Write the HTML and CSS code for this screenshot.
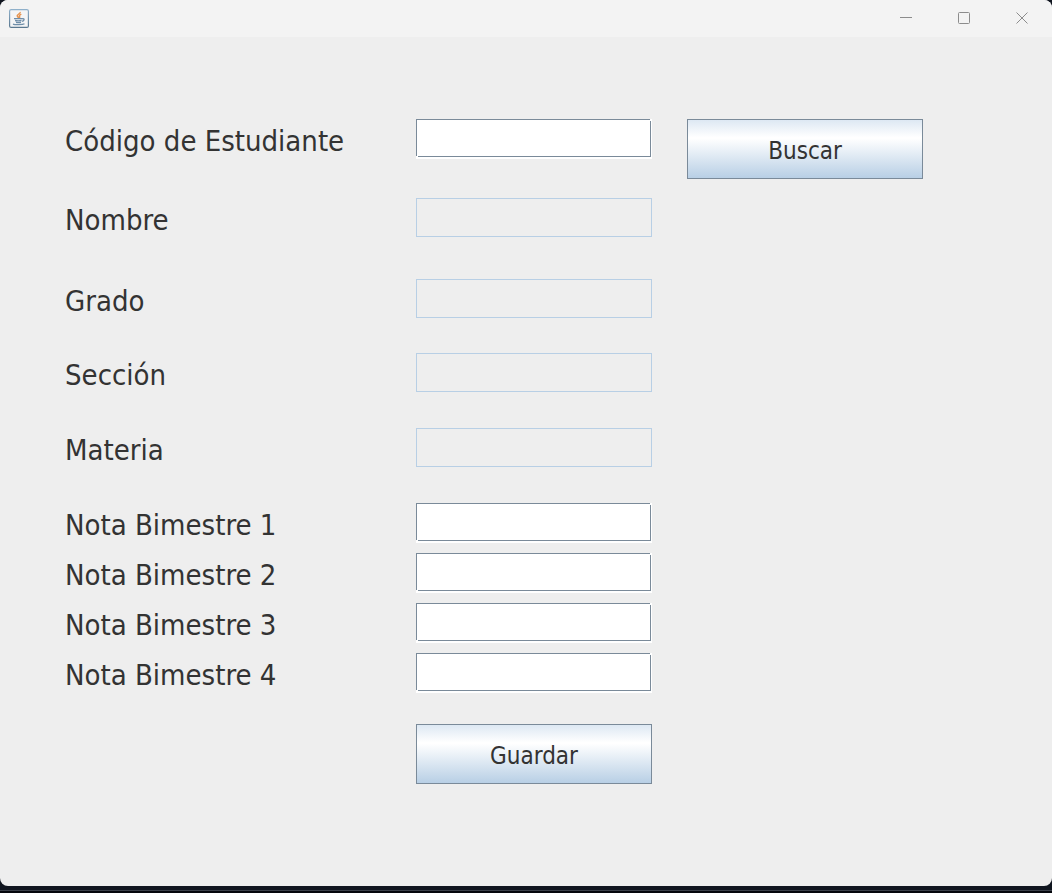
FILE: index.html
```
<!DOCTYPE html>
<html lang="es">
<head>
<meta charset="utf-8">
<meta name="viewport" content="width=device-width, initial-scale=1">
<title>Notas</title>
<link rel="stylesheet" href="styles.css">
</head>
<body>
<div class="window">
  <header class="titlebar">
    <svg class="app-icon" width="20" height="20" viewBox="0 0 20 20" aria-hidden="true">
      <defs>
        <linearGradient id="frame" x1="0" y1="0" x2="0" y2="1">
          <stop offset="0" stop-color="#8fb0ca"/>
          <stop offset="1" stop-color="#5a7890"/>
        </linearGradient>
      </defs>
      <rect x="0.6" y="0.6" width="18.800" height="17.800" rx="1.500" fill="#f4f5f6" stroke="url(#frame)" stroke-width="1.200"/>
      <path d="M11.200 3c.5 1.500-3 2.300-3 3.800 0 .9 1.200 1.200 1.500 2.200M12.300 5.200c-1.400.7-2.400 1.300-1.700 2.300.3.600.1 1.100-.4 1.500" fill="none" stroke="#e69450" stroke-width="1.500"/>
      <path d="M5 9.700h8.500M6 11.500q3.200.6 6.500 0M7 13.300q2.500.6 5 0M13.300 9.800c2.500-.6 2.300 1.800-.3 2.500M4 15.100c2 .9 9.500.8 11.500-.4" fill="none" stroke="#6f8ea9" stroke-width="1.300"/>
    </svg>
    <div class="window-controls">
      <button class="control" type="button" aria-label="Minimizar">
        <svg width="14" height="14" viewBox="0 0 14 14"><path d="M1 6.500h12"/></svg>
      </button>
      <button class="control" type="button" aria-label="Maximizar">
        <svg width="14" height="14" viewBox="0 0 14 14"><rect x="1.500" y="1.500" width="11" height="11" rx="1"/></svg>
      </button>
      <button class="control" type="button" aria-label="Cerrar">
        <svg width="14" height="14" viewBox="0 0 14 14"><path d="M1.500 1.500l11 11M12.500 1.500l-11 11"/></svg>
      </button>
    </div>
  </header>
  <form class="form">
    <div class="row row-search">
      <label class="label" for="codigo">Código de Estudiante</label>
      <input class="field" id="codigo" type="text">
      <button class="button" type="button">Buscar</button>
    </div>
    <div class="row row-name">
      <label class="label" for="nombre">Nombre</label>
      <input class="field" id="nombre" type="text" disabled>
    </div>
    <div class="row row-level">
      <label class="label" for="grado">Grado</label>
      <input class="field" id="grado" type="text" disabled>
    </div>
    <div class="row row-info">
      <label class="label" for="seccion">Sección</label>
      <input class="field" id="seccion" type="text" disabled>
    </div>
    <div class="row row-info">
      <label class="label" for="materia">Materia</label>
      <input class="field" id="materia" type="text" disabled>
    </div>
    <div class="row row-grade">
      <label class="label" for="nota1">Nota Bimestre 1</label>
      <input class="field" id="nota1" type="text">
    </div>
    <div class="row row-grade">
      <label class="label" for="nota2">Nota Bimestre 2</label>
      <input class="field" id="nota2" type="text">
    </div>
    <div class="row row-grade">
      <label class="label" for="nota3">Nota Bimestre 3</label>
      <input class="field" id="nota3" type="text">
    </div>
    <div class="row row-grade">
      <label class="label" for="nota4">Nota Bimestre 4</label>
      <input class="field" id="nota4" type="text">
    </div>
    <div class="row row-save">
      <button class="button save" type="button">Guardar</button>
    </div>
  </form>
</div>
</body>
</html>
```
FILE: styles.css
```
* { box-sizing: border-box; }

body {
  margin: 0;
  min-height: 100vh;
  display: flex;
  flex-direction: column;
  padding-bottom: 7px;
  background: linear-gradient(to top, #05070c 2px, #3a3f48 2px, #3a3f48 3px, #10151f 3px);
  color: #333;
  font-family: Tahoma, "DejaVu Sans Condensed", "Noto Sans", sans-serif;
}

.window {
  flex: 1;
  display: flex;
  flex-direction: column;
  overflow: hidden;
  border-radius: 8px;
  background: #eee;
}

.titlebar {
  display: flex;
  align-items: center;
  justify-content: space-between;
  height: 37px;
  padding-left: 9px;
  background: #f3f3f3;
}

.app-icon { display: block; }

.window-controls {
  display: flex;
  align-self: stretch;
  padding: 0 1px 2px 0;
}

.control {
  display: flex;
  align-items: center;
  justify-content: center;
  width: 58px;
  padding: 0;
  border: 0;
  background: none;
}

.control svg { fill: none; stroke: #8c8c8c; }

.form { padding: 82px 0 24px 65px; }

.row {
  display: grid;
  grid-template-columns: 316fr 236fr 236fr 94fr;
  column-gap: 35px;
  align-items: start;
}

.row-name { margin: 19px 0 41px; }
.row-level { margin-bottom: 34px; }
.row-info { margin-bottom: 35px; }
.row-grade { margin-bottom: 10px; }
.row-save { margin-top: 31px; }

.label {
  padding-top: 4px;
  font-size: 29px;
  line-height: 36px;
  white-space: nowrap;
}

.field {
  width: 100%;
  height: 40px;
  padding: 0 4px 2px;
  border: 0;
  border-radius: 0;
  color: #333;
  font: inherit;
  font-size: 24px;
  outline: 0;
  background:
    linear-gradient(#7a8a99, #7a8a99) 0 0 / calc(100% - 2px) 1px no-repeat,
    linear-gradient(#7a8a99, #7a8a99) 0 0 / 1px calc(100% - 3px) no-repeat,
    linear-gradient(#7a8a99, #7a8a99) calc(100% - 1px) 2px / 1px calc(100% - 4px) no-repeat,
    linear-gradient(#7a8a99, #7a8a99) 2px calc(100% - 2px) / calc(100% - 3px) 1px no-repeat,
    #fff;
}

.field:disabled {
  height: 39px;
  margin-bottom: 1px;
  border: 1px solid #b8cfe5;
  background: #eee;
}

.button {
  height: 60px;
  padding: 3px 8px 0;
  border: 1px solid #7a8a99;
  border-radius: 0;
  background: linear-gradient(#dde8f3 0%, #fff 30%, #fff 32%, #b8cfe5 100%);
  color: #333;
  font: inherit;
  font-size: 24px;
}

.save { grid-column: 2; }
```
